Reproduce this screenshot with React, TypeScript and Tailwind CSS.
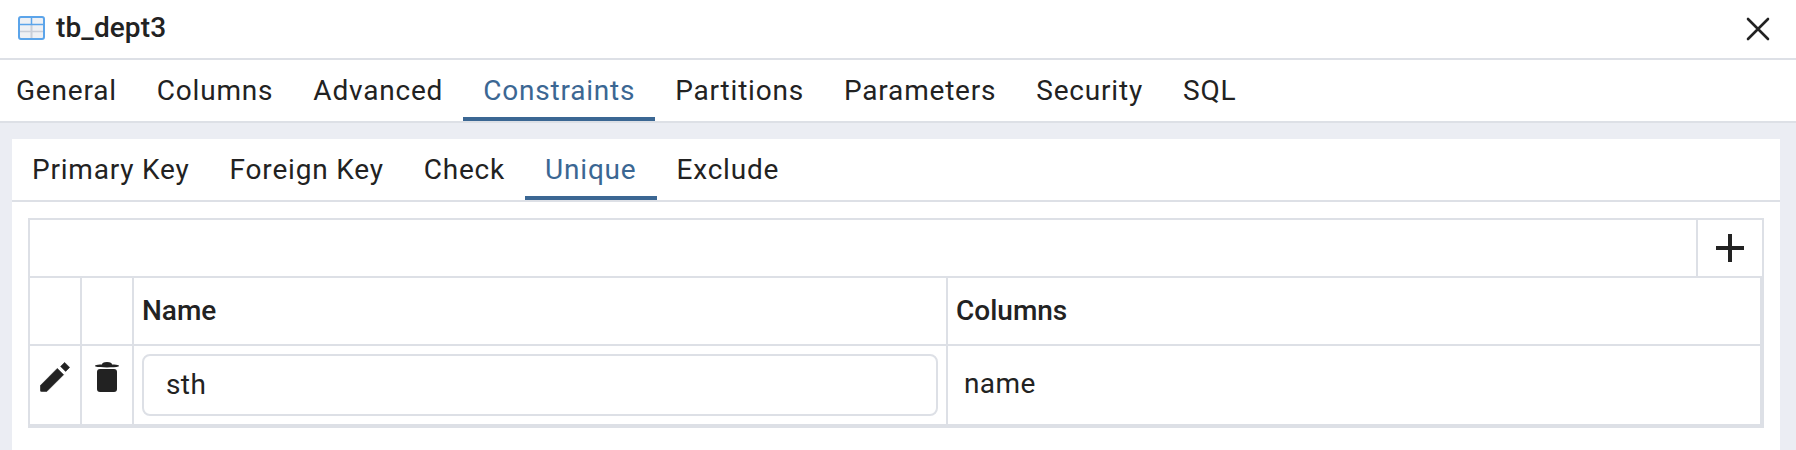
const mainTabs = ["General", "Columns", "Advanced", "Constraints", "Partitions", "Parameters", "Security", "SQL"];
const subTabs = ["Primary Key", "Foreign Key", "Check", "Unique", "Exclude"];

function TableIcon() {
  return (
    <svg width="27" height="24" viewBox="0 0 27 24" className="shrink-0">
      <rect x="1" y="1" width="25" height="22" rx="2" fill="#eef0f4" stroke="#5ba4ea" strokeWidth="2" />
      <path d="M2 15.500h23" stroke="#c9ced8" strokeWidth="1.500" />
      <path d="M13.500 9v13" stroke="#c9ced8" strokeWidth="2" />
      <path d="M2 8.500h23M13.500 2v6" stroke="#5ba4ea" strokeWidth="1.500" />
    </svg>
  );
}

function Tab({ label, active, first }: { label: string; active: boolean; first: boolean }) {
  return (
    <div
      className={`flex h-full items-center border-b-4 pr-5 pt-[5px] ${first ? "pl-4" : "pl-5"} ${
        active ? "border-[#3b6793] text-[#3b6793]" : "border-transparent text-[#222222]"
      }`}
    >
      {label}
    </div>
  );
}

export default function App() {
  return (
    <div className="flex h-[450px] w-[1796px] flex-col overflow-hidden bg-white font-['Roboto',sans-serif] text-[#222222]">
      <div className="flex h-[60px] shrink-0 items-center border-b-2 border-[#dde0e6] pb-[3px] pl-[18px] pr-[26px]">
        <TableIcon />
        <span className="ml-[11px] text-[28px] font-medium leading-none tracking-[0.1px]">tb_dept3</span>
        <svg width="24" height="24" viewBox="0 0 24 24" className="ml-auto mt-[3px]" fill="none" stroke="#222222" strokeWidth="2.6" strokeLinecap="round">
          <path d="M2 2l20 20M22 2L2 22" />
        </svg>
      </div>

      <div className="flex h-[63px] shrink-0 items-stretch border-b-2 border-[#dde0e6] text-[28px] tracking-[0.8px]">
        {mainTabs.map((t, i) => (
          <Tab key={t} label={t} active={t === "Constraints"} first={i === 0} />
        ))}
      </div>

      <div className="flex min-h-0 flex-1 flex-col bg-[#ebedf3] pl-3 pr-4 pt-4">
        <div className="flex flex-1 flex-col bg-white">
          <div className="flex h-[63px] shrink-0 items-stretch border-b-2 border-[#dde0e6] text-[28px] tracking-[0.8px]">
            {subTabs.map((t) => (
              <Tab key={t} label={t} active={t === "Unique"} first={false} />
            ))}
          </div>

          <div className="ml-4 mt-4 w-[1736px]">
            <div className="flex h-[60px] border-2 border-[#dde0e6]">
              <div className="flex-1" />
              <div className="flex w-[66px] items-center justify-center border-l-2 border-[#dde0e6]">
                <svg width="28" height="28" viewBox="0 0 28 28" fill="#222222">
                  <path d="M12 0h4v12h12v4H16v12h-4V16H0v-4h12z" />
                </svg>
              </div>
            </div>
            <div className="border-b-4 border-l-2 border-r-4 border-[#dde0e6]">
              <div className="flex h-[68px] border-b-2 border-[#dde0e6] text-[28px] font-medium">
                <div className="w-[52px] border-r-2 border-[#dde0e6]" />
                <div className="w-[52px] border-r-2 border-[#dde0e6]" />
                <div className="flex w-[814px] items-center border-r-2 border-[#dde0e6] pl-2">Name</div>
                <div className="flex flex-1 items-center pl-2">Columns</div>
              </div>
              <div className="flex h-[78px]">
                <div className="flex w-[52px] justify-center border-r-2 border-[#dde0e6] pt-[16px]">
                  {/* pencil, cap split from the body */}
                  <svg width="30" height="30" viewBox="0 0 30 30" fill="#222222" stroke="#222222" strokeWidth="0.6" strokeLinejoin="round">
                    <path d="M0.400 23.500 17.300 6.400l6.300 6.300L6.700 29.600H1.500q-1.100 0-1.100-1.100z" />
                    <path d="M20.600 4.400 24.600 0.400l5 5-4 4z" />
                  </svg>
                </div>
                <div className="flex w-[52px] justify-center border-r-2 border-[#dde0e6] pt-[16px]">
                  <svg width="24" height="30" viewBox="0 0 24 30" fill="#222222">
                    <path d="M7 2.600C7 1 8.500 0 12 0s5 1 5 2.600c3.200.1 5.400.3 6.400.7.8.3.8 1 0 1.300-2 .6-6.400.8-11.400.8S2.600 5.200.6 4.600c-.8-.3-.8-1 0-1.300 1-.4 3.200-.6 6.400-.7z" />
                    <rect x="2" y="7" width="20" height="23" rx="3" />
                  </svg>
                </div>
                <div className="flex w-[814px] items-center border-r-2 border-[#dde0e6] pl-2 pr-2">
                  <div className="flex h-[62px] w-full items-center rounded-[8px] border-2 border-[#dde0e6] pl-[22px] text-[28px] tracking-[0.4px]">
                    sth
                  </div>
                </div>
                <div className="flex flex-1 items-center pb-[2px] pl-4 text-[28px] tracking-[0.4px]">name</div>
              </div>
            </div>
          </div>
        </div>
      </div>
    </div>
  );
}
